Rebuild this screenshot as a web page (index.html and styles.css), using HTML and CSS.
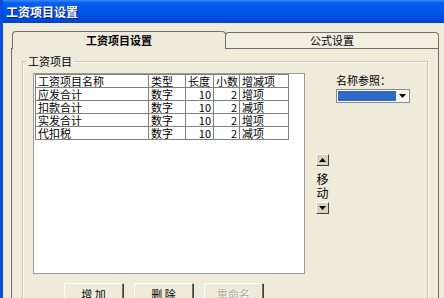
FILE: index.html
```html
<!DOCTYPE html>
<html lang="zh-CN">
<head>
  <meta charset="UTF-8">
  <title>工资项目设置</title>
  <link rel="stylesheet" href="styles.css">
</head>
<body>
  <div class="window">
    <div class="titlebar">工资项目设置</div>
    <div class="client">
      <!-- 选项卡 -->
      <div class="tabs">
        <div class="tab active">工资项目设置</div>
        <div class="tab">公式设置</div>
      </div>
      <div class="panel">
        <fieldset class="group">
          <legend>工资项目</legend>
          <div class="group-body">
            <div class="list">
              <table>
                <colgroup>
                  <col style="width:113px">
                  <col style="width:37px">
                  <col style="width:28px">
                  <col style="width:26px">
                  <col style="width:49px">
                </colgroup>
                <thead>
                  <tr><th>工资项目名称</th><th>类型</th><th>长度</th><th>小数</th><th>增减项</th></tr>
                </thead>
                <tbody>
                  <tr><td>应发合计</td><td>数字</td><td class="num">10</td><td class="num">2</td><td>增项</td></tr>
                  <tr><td>扣款合计</td><td>数字</td><td class="num">10</td><td class="num">2</td><td>减项</td></tr>
                  <tr><td>实发合计</td><td>数字</td><td class="num">10</td><td class="num">2</td><td>增项</td></tr>
                  <tr><td>代扣税</td><td>数字</td><td class="num">10</td><td class="num">2</td><td>减项</td></tr>
                </tbody>
              </table>
            </div>
            <div class="side">
              <div class="ref">
                <div class="ref-label">名称参照：</div>
                <div class="combo">
                  <span class="combo-value"></span>
                  <span class="combo-btn">
                    <svg width="7" height="4" viewBox="0 0 7 4"><path d="M0 0h7L3.5 4z" fill="#000"/></svg>
                  </span>
                </div>
              </div>
              <div class="move">
                <button class="arrow"><svg width="7" height="4" viewBox="0 0 7 4"><path d="M0 4h7L3.5 0z" fill="#000"/></svg></button>
                <div class="move-text">移<br>动</div>
                <button class="arrow"><svg width="7" height="4" viewBox="0 0 7 4"><path d="M0 0h7L3.5 4z" fill="#000"/></svg></button>
              </div>
            </div>
          </div>
          <div class="actions">
            <button class="btn">增 加</button>
            <button class="btn">删 除</button>
            <button class="btn" disabled>重命名</button>
          </div>
        </fieldset>
      </div>
    </div>
  </div>
</body>
</html>
```

FILE: styles.css
```css
body {
  margin: 0;
  font-family: "Noto Sans CJK SC", "Liberation Sans", sans-serif;
  font-size: 11px;
  color: #000;
  background: #fff;
}
.window {
  width: 444px;
  height: 298px;
  box-sizing: border-box;
  border-left: 3px solid #0a4ddf;
  overflow: hidden;
  background: #eeebda;
}
.titlebar {
  height: 23px;
  line-height: 23px;
  padding-left: 3px;
  color: #fff;
  font-weight: bold;
  font-size: 12px;
  text-shadow: 1px 1px 0 #0a1e7a;
  background: linear-gradient(to bottom, #3b8cf8 0%, #0a5ff0 12%, #0055e6 50%, #0048d8 90%, #0a3cc0 100%);
}
.client {
  padding: 8px 0 0 8px;
}
.tabs {
  display: flex;
  align-items: flex-end;
  margin-left: 1px;
  height: 17px;
}
.tab {
  box-sizing: border-box;
  height: 16px;
  line-height: 15px;
  text-align: center;
  border: 1px solid #6f6f6f;
  border-bottom: none;
  border-radius: 4px 4px 0 0;
  background: #f2efe0;
}
.tab.active {
  width: 214px;
  height: 18px;
  line-height: 17px;
  margin-bottom: -1px;
  font-weight: bold;
  position: relative;
  z-index: 1;
  background: #eeebda;
}
.tab + .tab {
  width: 214px;
  margin-left: -1px;
}
.panel {
  width: 428px;
  height: 260px;
  box-sizing: border-box;
  border: 1px solid #6f6f6f;
  border-bottom: none;
}
.group {
  margin: 6px 10px 0 10px;
  padding: 6px 10px 0 10px;
  min-width: 0;
  height: 260px;
  border: 1px solid #c9c6b6;
  box-shadow: inset 1px 1px 0 #fff, 1px 1px 0 #fff;
}
.group legend {
  margin-left: -7px;
  padding: 0 2px;
  line-height: 12px;
}
.group-body {
  display: grid;
  grid-template-columns: 272px 1fr;
}
.list {
  height: 201px;
  box-sizing: border-box;
  border: 1px solid #9a9a9a;
  background: #fff;
}
table {
  border-collapse: collapse;
  table-layout: fixed;
  width: 253px;
  margin-left: 1px;
}
th, td {
  border: 1px solid #808080;
  height: 12px;
  line-height: 12px;
  padding: 0 2px;
  text-align: left;
  font-weight: normal;
  white-space: nowrap;
}
td.num {
  text-align: right;
}
.side {
  padding-left: 11px;
}
.ref {
  margin-left: 20px;
}
.ref-label {
  line-height: 13px;
  margin-top: 1px;
}
.combo {
  display: flex;
  width: 74px;
  height: 14px;
  margin-top: 2px;
  box-sizing: border-box;
  border: 1px solid #8a8a8a;
  padding: 1px;
  background: #fff;
}
.combo-value {
  flex: 1;
  background: #3169c6;
}
.combo-btn {
  width: 12px;
  display: flex;
  align-items: center;
  justify-content: center;
  background: #f4f3ee;
}
.move {
  width: 13px;
  margin-top: 51px;
  text-align: center;
}
.arrow {
  display: flex;
  align-items: center;
  justify-content: center;
  width: 13px;
  height: 12px;
  padding: 0;
  box-sizing: border-box;
  border: 1px solid;
  border-color: #fff #404040 #404040 #fff;
  background: #d6d2c2;
}
.move-text {
  padding: 6px 0 2px;
  line-height: 14px;
  font-size: 12px;
}
.actions {
  display: flex;
  gap: 11px;
  margin: 9px 0 0 31px;
}
.btn {
  width: 59px;
  height: 22px;
  padding: 0;
  font-family: inherit;
  font-size: 11px;
  background: #eeebda;
  border: 1px solid;
  border-color: #fff #716f64 #716f64 #fff;
  box-shadow: 1px 1px 0 #404040;
}
.btn:disabled {
  color: #aca899;
  text-shadow: 1px 1px 0 #fff;
}
```
